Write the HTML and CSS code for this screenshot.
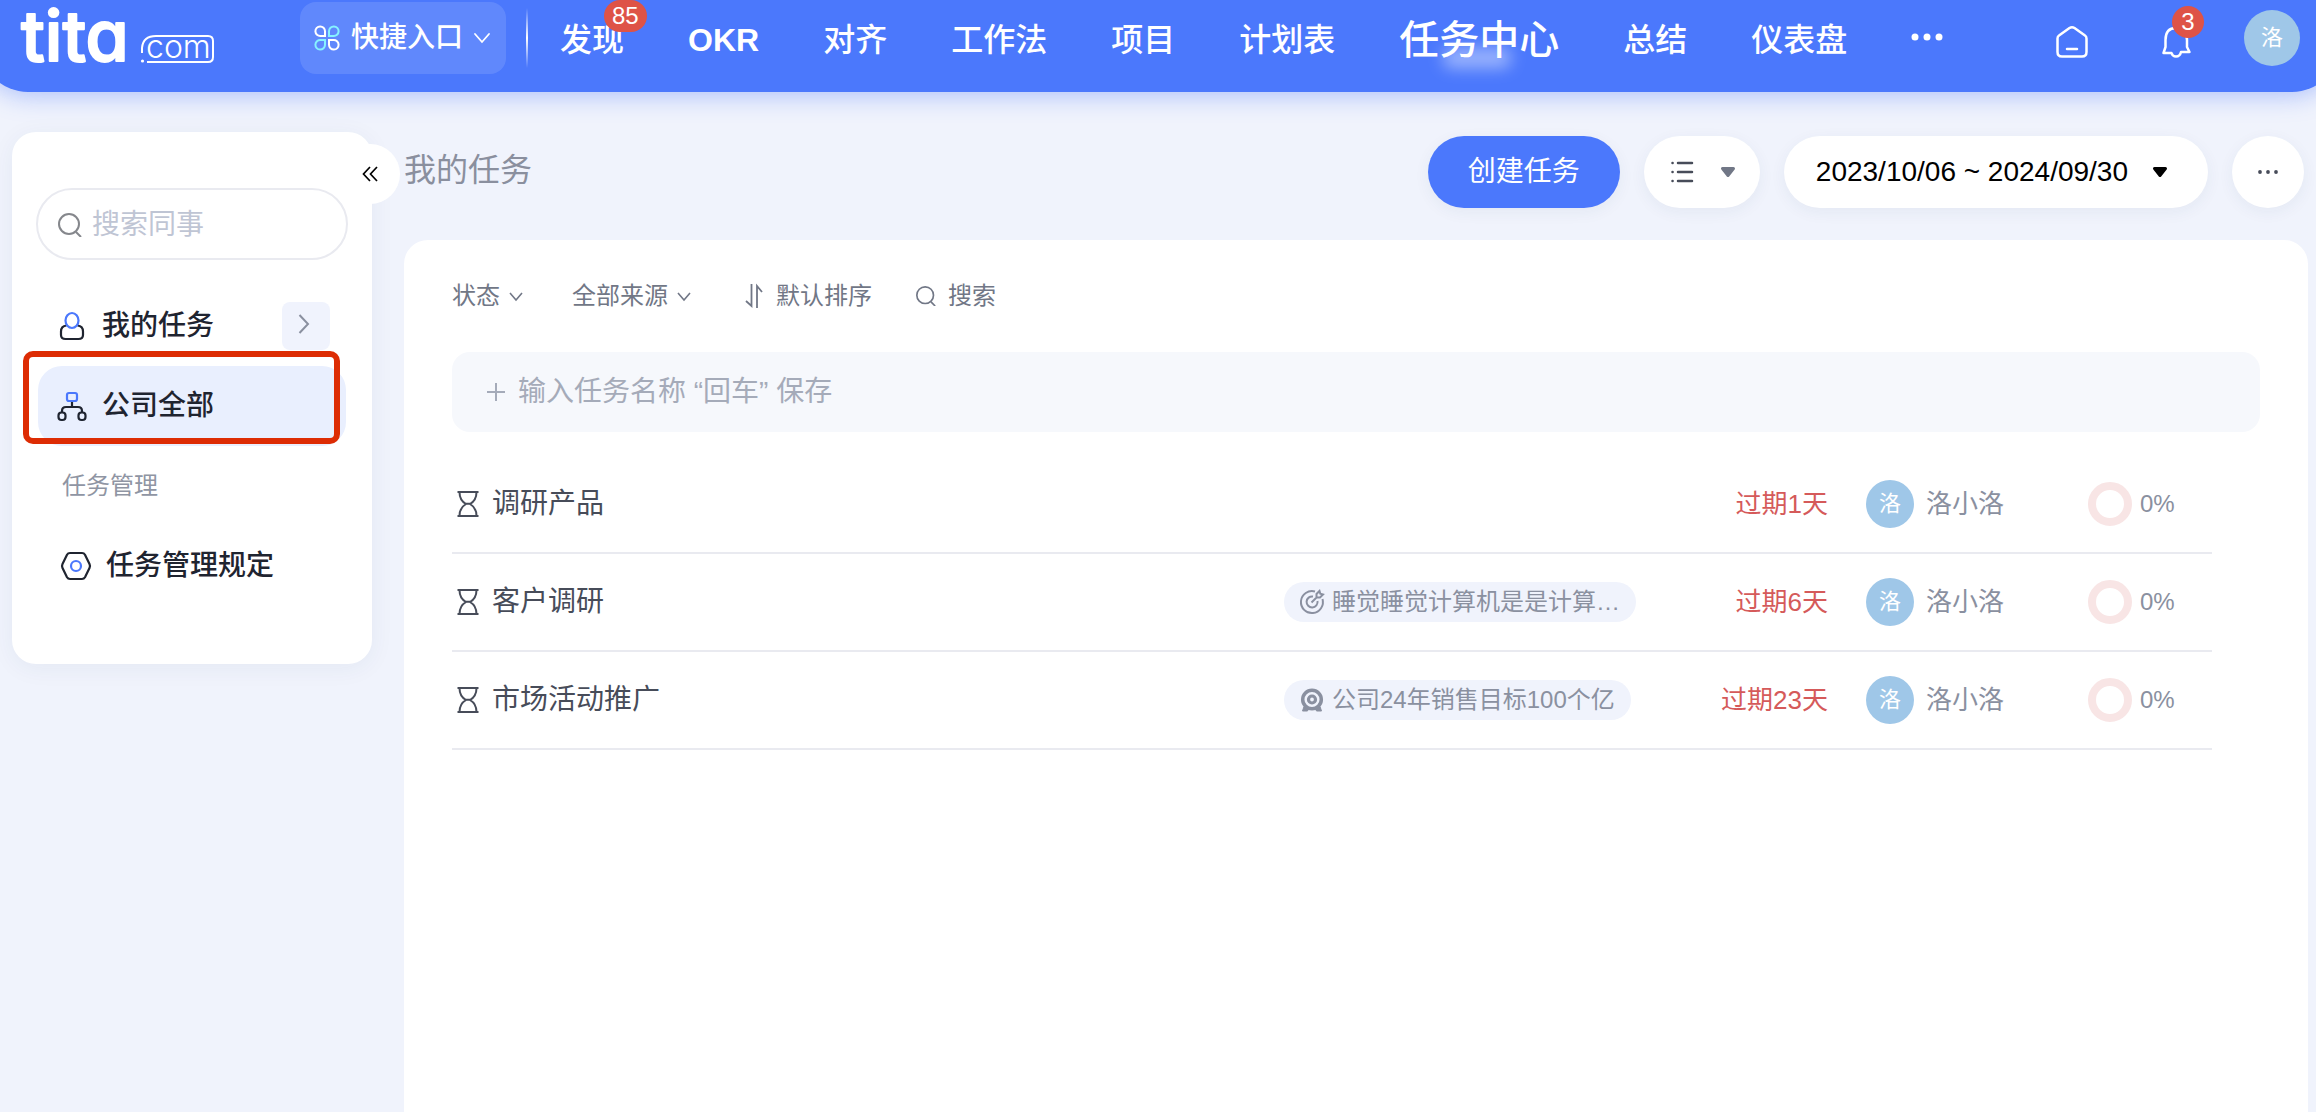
FILE: index.html
```html
<!DOCTYPE html>
<html lang="zh-CN">
<head>
<meta charset="utf-8">
<meta name="viewport" content="width=device-width, initial-scale=1">
<title>任务中心</title>
<link rel="stylesheet" href="styles.css">
</head>
<body>
<svg class="defs" aria-hidden="true">
  <symbol id="chevron" viewBox="0 0 24 24"><path d="M6 9l6 7 6-7" fill="none" stroke="currentColor" stroke-width="1.600"/></symbol>
  <symbol id="search" viewBox="0 0 24 24"><circle cx="11" cy="11" r="10" fill="none" stroke="currentColor" stroke-width="2"/><path d="M18 19l5 5" fill="none" stroke="currentColor" stroke-width="2"/></symbol>
  <symbol id="caret" viewBox="0 0 16 12"><path d="M2.500 2.500h11l-5.500 7z" fill="currentColor" stroke="currentColor" stroke-width="3" stroke-linejoin="round"/></symbol>
  <symbol id="hourglass" viewBox="0 0 24 28"><g fill="none" stroke="currentColor" stroke-width="2"><path d="M1.500 2h21M1.500 26h21M3.500 2c0 7 3 10 6.500 12c-3.500 2-6.500 5-6.500 12M20.500 2c0 7-3 10-6.500 12c3.500 2 6.500 5 6.500 12M9 13.700h6"/></g></symbol>
</svg>

<header class="topbar">
  <a class="logo" href="#" aria-label="tita.com">
    <svg width="196" height="56" viewBox="0 0 196 56">
      <text class="logo-main" x="1" y="51">tita</text>
      <text class="logo-com" x="126" y="48">com</text>
      <path d="M122 43V38Q123 26 136 26H188Q193 26 193 31V47Q193 52 188 52H127" fill="none" stroke="#fff" stroke-width="2"/>
      <circle cx="122.500" cy="51" r="1.600" fill="#fff"/>
    </svg>
  </a>
  <button class="quick" type="button">
    <svg width="26" height="26" viewBox="0 0 26 26" fill="none" stroke-width="2">
      <path d="M11 11H6.500a4.800 4.800 0 1 1 4.500-4.800z" stroke="#fff"/>
      <path d="M15 11V6.200A4.800 4.800 0 1 1 19.500 11z" stroke="#86f2ff"/>
      <path d="M11 15v4.800A4.800 4.800 0 1 1 6.500 15z" stroke="#86f2ff"/>
      <path d="M15 15h4.500a4.800 4.800 0 1 1-4.500 4.800z" stroke="#fff"/>
    </svg>
    <span>快捷入口</span>
    <svg width="16" height="12" viewBox="0 0 16 12"><path d="M1 2l7 8 7-8" fill="none" stroke="#fff" stroke-width="1.800" stroke-linecap="round"/></svg>
  </button>
  <span class="divider"></span>
  <nav class="nav">
    <a href="#">发现<span class="badge">85</span></a>
    <a class="latin" href="#">OKR</a>
    <a href="#">对齐</a>
    <a href="#">工作法</a>
    <a href="#">项目</a>
    <a href="#">计划表</a>
    <a class="current" href="#" aria-current="page">任务中心</a>
    <a href="#">总结</a>
    <a href="#">仪表盘</a>
    <a href="#" aria-label="更多"><svg width="32" height="12" viewBox="0 0 32 12" fill="#fff"><circle cx="4" cy="3" r="3.500"/><circle cx="16" cy="3" r="3.500"/><circle cx="28" cy="3" r="3.500"/></svg></a>
  </nav>
  <div class="tools">
    <a class="home" href="#" aria-label="首页"><svg width="32" height="40" viewBox="0 0 32 40" fill="none" stroke="#fff" stroke-width="2.500" stroke-linejoin="round" stroke-linecap="round"><path d="M13.500 10L3 17.500Q1.500 18.500 1.500 20.500V34Q1.500 38.500 6 38.500H26Q30.500 38.500 30.500 34V20.500Q30.500 18.500 29 17.500L18.500 10Q16 8.400 13.500 10zM11 31h10"/></svg></a>
    <button class="bell" type="button" aria-label="通知"><svg width="32" height="40" viewBox="0 0 32 40" fill="none" stroke="#fff" stroke-width="2.500" stroke-linejoin="round"><path d="M5.500 22Q5.500 10 16 10Q27 10 27 22V29L29.500 34H21Q20 38.500 16 38.500Q12.500 38.500 11.500 35H3.500L5.500 29z"/></svg><span class="badge">3</span></button>
    <a class="avatar avatar-large" href="#">洛</a>
  </div>
</header>

<div class="layout">
  <aside class="sidebar">
    <button class="collapse" type="button" aria-label="收起"><svg width="16" height="16" viewBox="0 0 16 16" fill="none" stroke="#000" stroke-width="1.700"><path d="M8 1L1.500 8L8 15M15 1L8.500 8L15 15"/></svg></button>
    <label class="people-search">
      <svg width="24" height="24"><use href="#search"/></svg>
      <input type="text" placeholder="搜索同事" aria-label="搜索同事">
    </label>
    <div class="side-row">
      <a class="side-item" href="#">
        <svg width="32" height="32" viewBox="0 0 32 32" fill="none" stroke-width="2.200"><path d="M10.500 15.500Q5 16 5 21.500V25Q5 29 9.500 29H22.500Q27 29 27 25V21.500Q27 16 21.500 15.500" stroke="#1f2430"/><ellipse cx="16" cy="10.500" rx="6.500" ry="7.500" stroke="#4b78fc"/></svg>
        我的任务
      </a>
      <button class="expand" type="button" aria-label="展开"><svg width="12" height="20" viewBox="0 0 12 20"><path d="M1.500 1l8.500 9-8.500 9" fill="none" stroke="#8a90a0" stroke-width="2"/></svg></button>
    </div>
    <div class="side-row">
      <a class="side-item selected" href="#" aria-current="page">
        <svg width="32" height="32" viewBox="0 0 32 32" fill="none" stroke="#1f2430" stroke-width="2.200"><rect x="11" y="3" width="10" height="8" rx="2" stroke="#4b78fc"/><path d="M16 12v5M6 23v-2q0-4 4-4h12q4 0 4 4v2"/><rect x="2.500" y="22.500" width="7" height="7.500" rx="3"/><rect x="22.500" y="22.500" width="7" height="7.500" rx="3"/></svg>
        公司全部
      </a>
      <span class="highlight"></span>
    </div>
    <h2 class="side-heading">任务管理</h2>
    <div class="side-row">
      <a class="side-item" href="#">
        <svg width="36" height="32" viewBox="0 0 36 32" fill="none" stroke-width="2.200"><path d="M14 3H26Q28 3 29 4.700L33.500 14Q34.500 16 33.500 18L29 27.300Q28 29 26 29H14Q12 29 11 27.300L6.500 18Q5.500 16 6.500 14L11 4.700Q12 3 14 3z" stroke="#1f2430"/><circle cx="20" cy="16" r="5" stroke="#4b78fc"/></svg>
        任务管理规定
      </a>
    </div>
  </aside>

  <main class="main">
    <div class="page-head">
      <h1>我的任务</h1>
      <div class="actions">
        <button class="pill primary" type="button">创建任务</button>
        <button class="pill view" type="button" aria-label="视图">
          <svg width="24" height="24" viewBox="0 0 24 24" stroke="#474c59" stroke-width="2.500" stroke-linecap="round"><path d="M8 3h14M8 12h14M8 21h14M2.500 3h.1M2.500 12h.1M2.500 21h.1"/></svg>
          <svg class="grey" width="16" height="12"><use href="#caret"/></svg>
        </button>
        <button class="pill date" type="button">2023/10/06 ~ 2024/09/30
          <svg width="16" height="12"><use href="#caret"/></svg>
        </button>
        <button class="pill more" type="button" aria-label="更多"><svg width="20" height="4" viewBox="0 0 20 4" fill="#474c59"><circle cx="2" cy="2" r="1.900"/><circle cx="10" cy="2" r="1.900"/><circle cx="18" cy="2" r="1.900"/></svg></button>
      </div>
    </div>

    <section class="panel">
      <div class="filters">
        <button class="filter menu" type="button">状态<svg width="24" height="24"><use href="#chevron"/></svg></button>
        <button class="filter menu" type="button">全部来源<svg width="24" height="24"><use href="#chevron"/></svg></button>
        <button class="filter" type="button"><svg width="24" height="24" viewBox="0 0 24 24" fill="none" stroke="currentColor" stroke-width="1.800"><path d="M11.500 0v22L6 17M17 24V2l5 6"/></svg>默认排序</button>
        <button class="filter" type="button"><svg width="20" height="20"><use href="#search"/></svg>搜索</button>
      </div>
      <label class="new-task">
        <svg width="20" height="20" viewBox="0 0 20 20"><path d="M1 10h18M10 1v18" stroke="#a5abb9" stroke-width="2"/></svg>
        <input type="text" placeholder="输入任务名称 “回车” 保存" aria-label="任务名称">
      </label>
      <table class="tasks">
        <colgroup><col><col class="col-tag"><col class="col-due"><col class="col-owner"><col class="col-progress"></colgroup>
        <tbody>
          <tr>
            <td><div class="task-name"><svg width="24" height="28"><use href="#hourglass"/></svg>调研产品</div></td>
            <td></td>
            <td class="due">过期1天</td>
            <td><div class="owner"><span class="avatar">洛</span>洛小洛</div></td>
            <td><div class="progress"><span class="ring"></span>0%</div></td>
          </tr>
          <tr>
            <td><div class="task-name"><svg width="24" height="28"><use href="#hourglass"/></svg>客户调研</div></td>
            <td><a class="tag" href="#"><svg width="24" height="24" viewBox="0 0 24 24" fill="none" stroke="currentColor" stroke-width="2"><path d="M15 1.500A11 11 0 1 0 22.500 9M13 6.500A5.500 5.500 0 1 0 17.500 11M11.500 12.500L17 7M16.500 7.500V4l3-3 .8 2.700 2.700.8-3 3z"/></svg>睡觉睡觉计算机是是计算…</a></td>
            <td class="due">过期6天</td>
            <td><div class="owner"><span class="avatar">洛</span>洛小洛</div></td>
            <td><div class="progress"><span class="ring"></span>0%</div></td>
          </tr>
          <tr>
            <td><div class="task-name"><svg width="24" height="28"><use href="#hourglass"/></svg>市场活动推广</div></td>
            <td><a class="tag" href="#"><svg width="24" height="24" viewBox="0 0 24 24" fill="none" stroke="currentColor"><circle cx="12" cy="11.500" r="9.300" stroke-width="3.500"/><circle cx="12" cy="11.500" r="3.500" stroke-width="3.200"/><path d="M4 18.500l-1.500 4.500h5L9 20M20 18.500l1.500 4.500h-5L15 20" fill="currentColor" stroke-width="1"/></svg>公司24年销售目标100个亿</a></td>
            <td class="due">过期23天</td>
            <td><div class="owner"><span class="avatar">洛</span>洛小洛</div></td>
            <td><div class="progress"><span class="ring"></span>0%</div></td>
          </tr>
        </tbody>
      </table>
    </section>
  </main>
</div>
</body>
</html>
```

FILE: styles.css
```css
* { box-sizing: border-box; }

body {
  margin: 0;
  min-height: 100vh;
  display: flex;
  flex-direction: column;
  overflow-x: clip;
  background: #f0f3fc;
  color: #1f2430;
  font-family: "Liberation Sans", "Noto Sans CJK SC", sans-serif;
  font-size: 28px;
  line-height: 40px;
}

button, input {
  margin: 0;
  padding: 0;
  border: 0;
  background: none;
  font: inherit;
  color: inherit;
}

button { cursor: pointer; }
a { color: inherit; text-decoration: none; }
svg { display: block; flex: none; overflow: visible; }
h1, h2 { margin: 0; font-weight: 400; }
.defs { position: absolute; width: 0; height: 0; }

/* Top bar */
.topbar {
  position: relative;
  z-index: 0;
  height: 92px;
  padding: 0 16px 16px 20px;
  display: flex;
  align-items: center;
  color: #fff;
}

.topbar::before {
  content: "";
  position: absolute;
  z-index: -1;
  inset: 0 -24px 0 -20px;
  border-radius: 0 0 48px 48px;
  background: #4b78fc;
  box-shadow: 0 4px 24px rgba(75, 120, 252, 0.4);
}

.logo { margin-right: 84px; }
.logo-main {
  font: 500 70px Inter, sans-serif;
  font-feature-settings: "cv11";
  fill: #fff;
  stroke: #fff;
  stroke-width: 2px;
  stroke-linejoin: round;
}
.logo-com { font: 300 32px Inter, sans-serif; fill: #fff; }

.quick {
  height: 72px;
  padding: 0 16px 0 14px;
  display: flex;
  align-items: center;
  gap: 11px;
  border-radius: 16px;
  background: rgba(255, 255, 255, 0.12);
  font-weight: 500;
}

.divider {
  width: 2px;
  height: 60px;
  margin: 0 32px 0 20px;
  background: linear-gradient(rgba(255, 255, 255, 0), #fff, rgba(255, 255, 255, 0));
}

.nav {
  padding-top: 3px;
  display: flex;
  align-items: center;
  gap: 64px;
  font-size: 32px;
  font-weight: 500;
  white-space: nowrap;
}
.nav a { position: relative; }
.nav .latin { font-weight: 700; }
.nav .current { font-size: 40px; }
.nav .current::after {
  content: "";
  position: absolute;
  left: 44px;
  right: 48px;
  bottom: -8px;
  height: 20px;
  border-radius: 8px;
  background: rgba(255, 255, 255, 0.45);
  filter: blur(8px);
}

.badge {
  position: absolute;
  left: 44px;
  top: -20px;
  min-width: 32px;
  height: 32px;
  padding: 0 8px;
  border-radius: 16px;
  background: #de5347;
  color: #fff;
  font-size: 24px;
  font-weight: 400;
  line-height: 32px;
  text-align: center;
}

.tools { margin-left: auto; display: flex; align-items: center; gap: 52px; }
.home { margin-right: 20px; }
.bell { position: relative; }
.bell .badge { left: 12px; top: -12px; }

.avatar {
  width: 48px;
  height: 48px;
  border-radius: 50%;
  background: #9fc7e8;
  color: #fff;
  font-size: 22px;
  line-height: 48px;
  text-align: center;
}
.avatar-large { width: 56px; height: 56px; line-height: 56px; }

/* Page frame */
.layout {
  flex: 1;
  display: flex;
  align-items: flex-start;
  gap: 32px;
  padding: 40px 8px 0 12px;
}

.sidebar {
  position: relative;
  flex: none;
  width: 360px;
  padding: 56px 24px 58px;
  border-radius: 24px;
  background: #fff;
  box-shadow: 0 4px 24px rgba(40, 60, 110, 0.06);
}

.collapse {
  position: absolute;
  top: 12px;
  right: -28px;
  width: 60px;
  height: 60px;
  display: grid;
  place-items: center;
  border-radius: 50%;
  background: #fff;
}

.people-search {
  height: 72px;
  margin-bottom: 26px;
  padding: 2px 20px 0;
  display: flex;
  align-items: center;
  gap: 10px;
  border: 2px solid #e9eaf0;
  border-radius: 36px;
  color: #85878c;
}
.people-search input { min-width: 0; flex: 1; }
input::placeholder { opacity: 1; color: #bfc5d4; }

.side-row { position: relative; padding: 0 2px; }
.side-item {
  height: 80px;
  padding-left: 18px;
  display: flex;
  align-items: center;
  gap: 14px;
  border-radius: 24px;
  font-weight: 500;
}
.side-item.selected { background: #e9effe; }

.expand {
  position: absolute;
  top: 16px;
  right: 18px;
  width: 48px;
  height: 48px;
  display: grid;
  place-items: center;
  padding: 0 4px 4px 0;
  border-radius: 8px;
  background: #f0f3fd;
}

.highlight {
  position: absolute;
  inset: -15px 8px 2px -13px;
  border: 6px solid #dd2c04;
  border-radius: 10px;
  pointer-events: none;
}

.side-heading { padding: 20px 26px; color: #8f95a3; font-size: 24px; }

/* Main column */
.main {
  flex: 1;
  min-width: 0;
  align-self: stretch;
  display: flex;
  flex-direction: column;
}

.page-head {
  padding: 4px 4px 32px 0;
  display: flex;
  align-items: center;
  justify-content: space-between;
}
.page-head h1 { padding-bottom: 4px; color: #8a8f9e; font-size: 32px; }

.actions { display: flex; gap: 24px; }
.pill {
  height: 72px;
  display: flex;
  align-items: center;
  justify-content: center;
  border-radius: 36px;
  background: #fff;
  box-shadow: 0 4px 16px rgba(40, 60, 110, 0.06);
}
.primary { padding: 0 40px; background: #4b78fc; color: #fff; }
.view { padding: 0 24px 0 26px; gap: 26px; }
.date { padding: 0 40px 0 32px; gap: 24px; color: #000; }
.more { width: 72px; }
.grey { color: #717786; }

.panel {
  flex: 1;
  padding: 32px 48px;
  border-radius: 24px 24px 0 0;
  background: #fff;
}

.filters { height: 48px; margin-bottom: 32px; display: flex; align-items: center; gap: 44px; }
.filter {
  display: flex;
  align-items: center;
  gap: 12px;
  color: #717786;
  font-size: 24px;
}
.filter.menu { gap: 4px; }

.new-task {
  height: 80px;
  margin-bottom: 24px;
  padding: 0 34px;
  display: flex;
  align-items: center;
  gap: 12px;
  border-radius: 18px;
  background: #f6f8fc;
}
.new-task input { flex: 1; min-width: 0; }
.new-task input::placeholder { color: #a5abb9; }

.tasks {
  width: calc(100% - 48px);
  table-layout: fixed;
  border-collapse: separate;
  border-spacing: 0;
}
.tasks td { height: 98px; padding: 0; border-bottom: 2px solid #e9eaf0; }
.col-tag { width: 376px; }
.col-due { width: 168px; }
.col-owner { width: 260px; }
.col-progress { width: 124px; }

.task-name { padding-left: 4px; display: flex; align-items: center; gap: 12px; color: #474c59; }

.tag {
  width: fit-content;
  height: 40px;
  padding: 0 16px;
  display: flex;
  align-items: center;
  gap: 8px;
  border-radius: 20px;
  background: #f0f3fc;
  color: #8a90a0;
  font-size: 24px;
  white-space: nowrap;
}

.tasks .due { color: #d55a5a; font-size: 26px; text-align: right; }
.owner { padding-left: 38px; display: flex; align-items: center; gap: 12px; color: #8a90a0; font-size: 26px; }
.progress { display: flex; align-items: center; gap: 8px; color: #8a90a0; font-size: 24px; }
.ring { width: 44px; height: 44px; border: 8px solid #f8e5e5; border-radius: 50%; }
```
